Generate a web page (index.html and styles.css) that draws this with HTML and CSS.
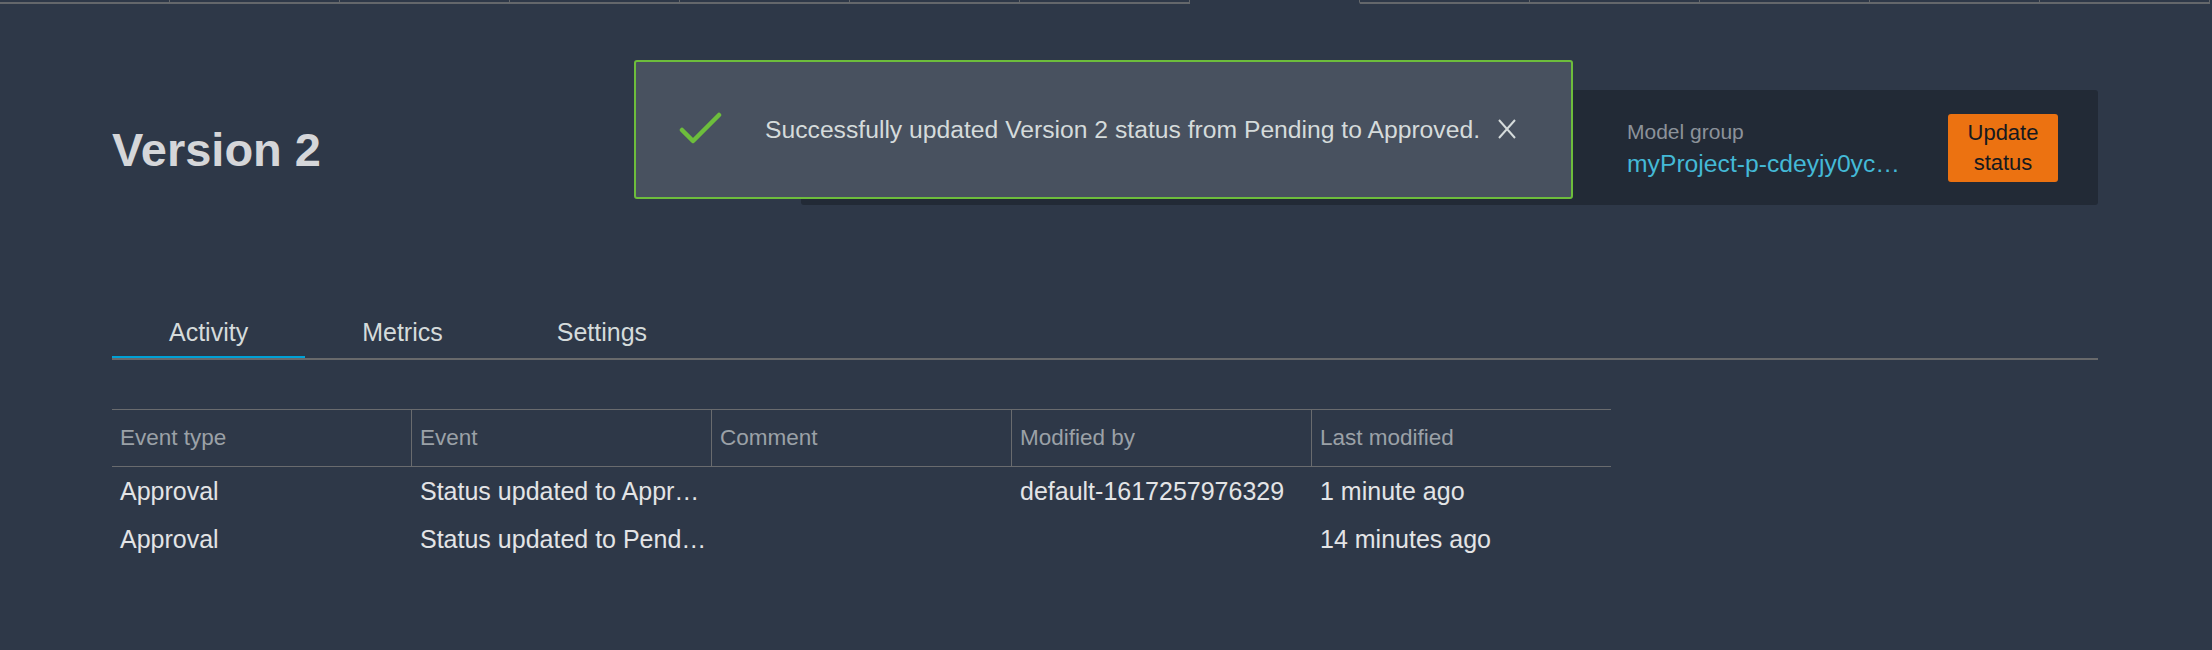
FILE: index.html
```html
<!DOCTYPE html>
<html lang="en">
<head>
<meta charset="utf-8">
<title>Version 2</title>
<link rel="stylesheet" href="styles.css">
</head>
<body>
<div class="topbar">
  <span class="ttab"></span><span class="ttab"></span><span class="ttab"></span><span class="ttab"></span>
  <span class="ttab"></span><span class="ttab"></span><span class="ttab"></span><span class="ttab active"></span>
  <span class="ttab"></span><span class="ttab"></span><span class="ttab"></span><span class="ttab"></span>
  <span class="ttab"></span>
</div>
<main class="page">
  <header class="head">
    <h1 class="title">Version 2</h1>
    <section class="summary">
      <div class="field">
        <div class="label">Model group</div>
        <a class="link">myProject-p-cdeyjy0yc…</a>
      </div>
      <button class="btn">Update<br>status</button>
    </section>
  </header>
  <nav class="tabs">
    <span class="tab active">Activity</span>
    <span class="tab">Metrics</span>
    <span class="tab">Settings</span>
  </nav>
  <table class="events">
    <colgroup><col class="c1"><col class="cn"><col class="cn"><col class="cn"><col class="cn"></colgroup>
    <thead>
      <tr><th>Event type</th><th>Event</th><th>Comment</th><th>Modified by</th><th>Last modified</th></tr>
    </thead>
    <tbody>
      <tr><td>Approval</td><td>Status updated to Appr…</td><td></td><td>default-1617257976329</td><td>1 minute ago</td></tr>
      <tr><td>Approval</td><td>Status updated to Pend…</td><td></td><td></td><td>14 minutes ago</td></tr>
    </tbody>
  </table>
</main>
<div class="toast" role="status">
  <svg class="check" width="44" height="34" viewBox="0 0 44 34"><path d="M4 19 L15 30 L41 4" fill="none" stroke="#6dbd3c" stroke-width="4.5" stroke-linecap="round" stroke-linejoin="round"/></svg>
  <span class="msg">Successfully updated Version 2 status from Pending to Approved.</span>
  <svg class="close" width="20" height="20" viewBox="0 0 20 20"><path d="M2 1 L18 19 M18 1 L2 19" fill="none" stroke="#d5dbdb" stroke-width="2"/></svg>
</div>
</body>
</html>
```
FILE: styles.css
```css
* { box-sizing: border-box; }
html, body { margin: 0; }
body {
  background: #2e3848;
  font-family: "Liberation Sans", Arial, sans-serif;
  color: #d5dbdb;
  min-height: 650px;
  position: relative;
  overflow: hidden;
}
.topbar { display: flex; height: 4px; overflow: hidden; }
.ttab {
  flex: none;
  width: 170px;
  height: 4px;
  border-bottom: 2px solid #64676b;
  border-right: 1px solid #64676b;
}
.ttab.active { border-bottom-color: transparent; }

.page { padding: 0 114px 0 112px; }

.head {
  margin-top: 86px;
  display: flex;
  align-items: center;
  height: 115px;
}
.title {
  flex: 1;
  margin: 0;
  padding-top: 4px;
  font-size: 47px;
  font-weight: bold;
  color: #d5d6d9;
}
.summary {
  width: 1297px;
  height: 115px;
  background: #222a36;
  border-radius: 3px;
  display: flex;
  align-items: center;
  justify-content: flex-end;
  gap: 48px;
  padding-right: 40px;
}
.field { display: flex; flex-direction: column; }
.label { font-size: 21px; line-height: 32px; color: #8c929a; }
.link { font-size: 24.7px; line-height: 32px; color: #44b9d6; white-space: nowrap; }
.btn {
  width: 110px;
  padding: 4px 0;
  border: none;
  border-radius: 3px;
  background: #ec7211;
  color: #16191f;
  font-family: inherit;
  font-size: 22px;
  line-height: 30px;
  text-align: center;
}

.tabs {
  margin-top: 100px;
  display: flex;
  border-bottom: 2px solid #68696b;
}
.tab {
  padding: 12px 57px 9px;
  font-size: 25px;
  line-height: 30px;
  color: #d5dbdb;
  border-bottom: 2px solid transparent;
}
.tab.active { border-bottom-color: #00a1d6; }

.events {
  margin-top: 49px;
  border-spacing: 0;
  table-layout: fixed;
  width: 1499px;
}
.c1 { width: 299px; }
.cn { width: 300px; }
.events th {
  height: 58px;
  padding: 0 8px;
  text-align: left;
  font-weight: normal;
  font-size: 22.5px;
  color: #9ba1a7;
  border-top: 1px solid #696b6e;
  border-bottom: 1px solid #696b6e;
}
.events th + th { border-left: 1px solid #696b6e; }
.events td {
  height: 48px;
  padding: 0 8px;
  font-size: 25px;
  color: #e3e4e6;
  white-space: nowrap;
  overflow: hidden;
}
.events td + td { padding-left: 9px; }

.toast {
  position: absolute;
  left: 634px;
  top: 60px;
  width: 939px;
  height: 139px;
  background: #48515f;
  border: 2px solid #6dbd3c;
  border-radius: 3px;
  display: flex;
  align-items: center;
  padding-left: 42px;
}
.check { flex: none; margin-top: -4px; }
.msg { margin-left: 43px; font-size: 24.7px; color: #d5dbdb; white-space: nowrap; }
.close { flex: none; margin-left: 17px; margin-top: -2px; }
```
